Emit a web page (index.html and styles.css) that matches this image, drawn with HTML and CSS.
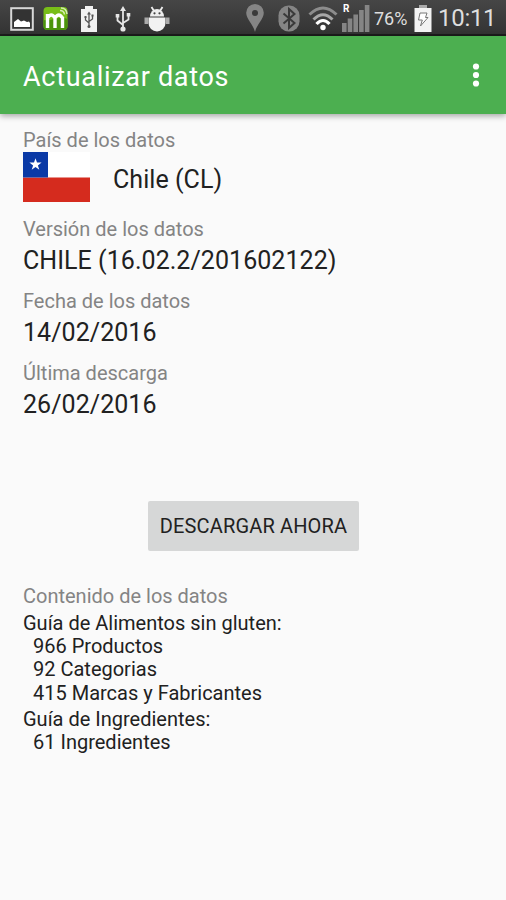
FILE: index.html
```html
<!DOCTYPE html>
<html lang="es">
<head>
  <meta charset="UTF-8" />
  <meta name="viewport" content="width=device-width, initial-scale=1.0"/>
  <title>Actualizar datos</title>
  <link rel="stylesheet" href="styles.css">
</head>
<body>

<!-- Barra de estado -->
<div class="status-bar">
  <div class="status-left">
    <svg width="24" height="24" viewBox="0 0 24 24">
      <rect x="1.2" y="1.2" width="21.6" height="21.6" fill="#333" stroke="#d8d8d8" stroke-width="2"/>
      <path d="M4 20v-5l2-1.500 2-1.500 3 2.500 3-1 3 1.500 2-.5 1 1.500V20z" fill="#fff"/>
    </svg>
    <svg width="26" height="25" viewBox="0 0 26 25">
      <rect x="0.500" y="1" width="24" height="23" rx="4" fill="#78bd18"/>
      <path d="M.5 14C8 16 16 9 24.500 13v7q0 4-4 4h-16q-4 0-4-4z" fill="#4b940b"/>
      <path d="M4.500 22V8M4.500 12q3.800-6 7.500 0V22M12 12q3.800-6 7.500 0V22" fill="none" stroke="#fff" stroke-width="3.400"/>
      <path d="M17 4.500q4 0 4.500 4M18 2q5.500 0 6 6" fill="none" stroke="#d6ecb4" stroke-width="1.500"/>
    </svg>
    <svg width="18" height="26" viewBox="0 0 18 26">
      <path d="M1 3h4V0h8v3h4v23H1z" fill="#f1f1f1"/>
      <path d="M9 21V7M5.500 11v3l3.500 3M12.500 9v4L9 15.500" fill="none" stroke="#555" stroke-width="1.300"/>
      <path d="M9 5.500l2 3H7zM4.500 10h2v2h-2zM11.500 8.500h2v2h-2z" fill="#555"/>
      <circle cx="9" cy="20.500" r="1.500" fill="#555"/>
    </svg>
    <svg width="16" height="26" viewBox="0 0 16 26">
      <path d="M8 23V3M2.500 10v4.500L8 19M13.500 8.500v5L8 17" fill="none" stroke="#e6e6e6" stroke-width="1.800"/>
      <path d="M8 0l3 5H5zM.7 8h3.600v3.600H.7zM11.700 7h3.600v3.600h-3.600z" fill="#e6e6e6"/>
      <circle cx="8" cy="23" r="2.600" fill="#e6e6e6"/>
    </svg>
    <svg width="26" height="26" viewBox="0 0 26 26">
      <path d="M7.500 1l2.500 4M18.500 1L16 5" stroke="#eee" stroke-width="1.800"/>
      <path d="M6 10.500a7 7.500 0 0 1 14 0z" fill="#eee"/>
      <path d="M4.500 11.500h17v5.500a8.500 8.500 0 0 1-17 0z" fill="#f2f2f2"/>
      <path d="M.5 11.500h3.500v6.500H.5zM22 11.500h3.500v6.500H22z" fill="#aaa"/>
      <circle cx="10.500" cy="7.300" r="1.100" fill="#444"/>
      <circle cx="15.500" cy="7.300" r="1.100" fill="#444"/>
    </svg>
  </div>
  <div class="status-right">
    <svg class="pin" width="18" height="28" viewBox="0 0 18 28">
      <path d="M9 0a8.800 8.800 0 0 1 8.800 8.800C17.800 15 11 20 9 28 7 20 .2 15 .2 8.800A8.800 8.800 0 0 1 9 0z" fill="#858585"/>
      <circle cx="9" cy="9" r="3" fill="#3a3a3a"/>
    </svg>
    <svg class="bluetooth" width="22" height="27" viewBox="0 0 22 27">
      <rect x="0.500" y="0.500" width="21" height="26" rx="10" fill="#858585"/>
      <path d="M5.500 8.500l11 9.500-5.500 5V4l5.500 5-11 9.500" fill="none" stroke="#3a3a3a" stroke-width="2"/>
    </svg>
    <svg class="wifi" width="30" height="25" viewBox="0 0 30 25">
      <path d="M1.500 8.500q13.500-13 27 0" fill="none" stroke="#8c8c8c" stroke-width="3"/>
      <path d="M5.500 13.500q9.500-9.500 19 0" fill="none" stroke="#a8a8a8" stroke-width="3"/>
      <path d="M8.500 18q6.500-7 13 0" fill="none" stroke="#fff" stroke-width="3.200"/>
      <circle cx="15" cy="21.500" r="2.700" fill="#fff"/>
    </svg>
    <div class="signal">
      <span class="roaming">R</span>
      <svg width="28" height="27" viewBox="0 0 28 27">
        <path d="M0 18h4.600v9H0zM5.700 13.500h4.600V27H5.700zM11.400 9.500H16V27h-4.600zM17.100 5h4.600v22h-4.600zM22.800 0h4.600v27h-4.600z" fill="#858585"/>
      </svg>
    </div>
    <span class="percent">76%</span>
    <svg class="battery" width="18" height="27" viewBox="0 0 18 27">
      <path d="M.5 3H17.500v24H.5z" fill="#f3f3f3"/>
      <path d="M5 0h8v3H5z" fill="#aaa"/>
      <path d="M6 8h7l-1.500 4.500H14L6.500 21l1.800-6H4.500z" fill="#fff" stroke="#777" stroke-width="1"/>
    </svg>
    <span class="clock">10:11</span>
  </div>
</div>

<!-- Barra de la aplicación -->
<header class="app-bar">
  <h1>Actualizar datos</h1>
  <button class="menu-btn" aria-label="Más opciones">
    <svg width="8" height="24" viewBox="0 0 8 24">
      <circle cx="4" cy="3.500" r="3.100" fill="#fff"/>
      <circle cx="4" cy="12" r="3.100" fill="#fff"/>
      <circle cx="4" cy="20.500" r="3.100" fill="#fff"/>
    </svg>
  </button>
</header>

<!-- Contenido principal -->
<main class="content">
  <div class="label">País de los datos</div>
  <div class="country">
    <svg width="67" height="50" viewBox="0 0 67 50">
      <rect width="67" height="25.500" fill="#fff"/>
      <rect y="25.500" width="67" height="24.500" fill="#d52b1e"/>
      <rect width="25" height="25.500" fill="#0a39a6"/>
      <path d="M12.500 6.200l1.500 4.400h4.600l-3.700 2.800 1.400 4.400-3.800-2.700-3.800 2.700 1.400-4.400-3.700-2.800H11z" fill="#fff"/>
    </svg>
    <span class="value">Chile (CL)</span>
  </div>

  <div class="field">
    <div class="label">Versión de los datos</div>
    <div class="value">CHILE (16.02.2/201602122)</div>
  </div>
  <div class="field">
    <div class="label">Fecha de los datos</div>
    <div class="value">14/02/2016</div>
  </div>
  <div class="field">
    <div class="label">Última descarga</div>
    <div class="value">26/02/2016</div>
  </div>

  <button class="download-btn">DESCARGAR AHORA</button>

  <div class="label">Contenido de los datos</div>
  <div class="guides">
    <div class="guide">
      <p>Guía de Alimentos sin gluten:</p>
      <ul>
        <li>966 Productos</li>
        <li>92 Categorias</li>
        <li>415 Marcas y Fabricantes</li>
      </ul>
    </div>
    <div class="guide">
      <p>Guía de Ingredientes:</p>
      <ul>
        <li>61 Ingredientes</li>
      </ul>
    </div>
  </div>
</main>

</body>
</html>
```
FILE: styles.css
```css
* {
  box-sizing: border-box;
}
body {
  margin: 0;
  height: 900px;
  background: #fafafa;
  font-family: Roboto, sans-serif;
  color: #212121;
  overflow: hidden;
}
svg {
  display: block;
  flex-shrink: 0;
}

/* Barra de estado */
.status-bar {
  height: 36px;
  padding: 0 10px;
  display: flex;
  justify-content: space-between;
  align-items: center;
  background: linear-gradient(#464646, #333);
  border-bottom: 2px solid #1c1c1c;
  color: #dedede;
}
.status-left {
  display: flex;
  align-items: center;
  gap: 9px;
  padding-top: 3px;
}
.status-left svg:nth-child(2) {
  margin-right: 2px;
}
.status-left svg:nth-child(4) {
  margin-left: 8px;
  margin-right: 4px;
}
.status-right {
  display: flex;
  align-items: center;
  padding-top: 2px;
}
.pin {
  margin-right: 14px;
}
.bluetooth {
  margin-right: 8px;
}
.wifi {
  margin-right: 4px;
}
.signal {
  position: relative;
  margin-right: 4px;
}
.roaming {
  position: absolute;
  top: -1px;
  left: 1px;
  font-size: 10px;
  line-height: 10px;
  font-weight: 700;
  color: #fff;
}
.percent {
  width: 35px;
  margin-right: 5px;
  font-size: 18px;
  white-space: nowrap;
}
.battery {
  margin-right: 6px;
}
.clock {
  width: 58px;
  font-size: 24px;
  letter-spacing: -0.3px;
  white-space: nowrap;
}

/* Barra de la aplicación */
.app-bar {
  height: 78px;
  padding: 0 26px 0 23px;
  display: flex;
  justify-content: space-between;
  align-items: center;
  background: #4caf50;
  box-shadow: 0 2px 6px rgba(0, 0, 0, 0.35);
  color: #fff;
}
.app-bar h1 {
  margin: 3px 0 0;
  font-size: 27px;
  font-weight: 400;
  letter-spacing: 0.7px;
}
.menu-btn {
  padding: 0;
  border: none;
  background: none;
  cursor: pointer;
}

/* Contenido */
.content {
  padding: 14px 23px 0;
}
.label {
  font-size: 20px;
  line-height: 24px;
  color: #848484;
}
.value {
  font-size: 25px;
  line-height: 40px;
  letter-spacing: 0.05px;
}
.country {
  display: flex;
  align-items: center;
  gap: 23px;
  margin-bottom: 15px;
}
.country .value {
  padding-top: 5px;
}
.field {
  margin-bottom: 8.2px;
}
.download-btn {
  display: block;
  width: 211px;
  height: 50px;
  margin: 75.4px auto 33px 125px;
  padding: 0;
  border: none;
  border-radius: 2px;
  background: #d6d7d7;
  color: #212121;
  font-family: inherit;
  font-size: 20px;
  letter-spacing: 0.15px;
  cursor: pointer;
}
.guides {
  padding-top: 4px;
}
.guide {
  font-size: 20px;
  line-height: 23.3px;
  margin-bottom: 3.2px;
}
.guide p {
  margin: 0;
}
.guide ul {
  margin: 0;
  padding: 0 0 0 10px;
  list-style: none;
}
```
